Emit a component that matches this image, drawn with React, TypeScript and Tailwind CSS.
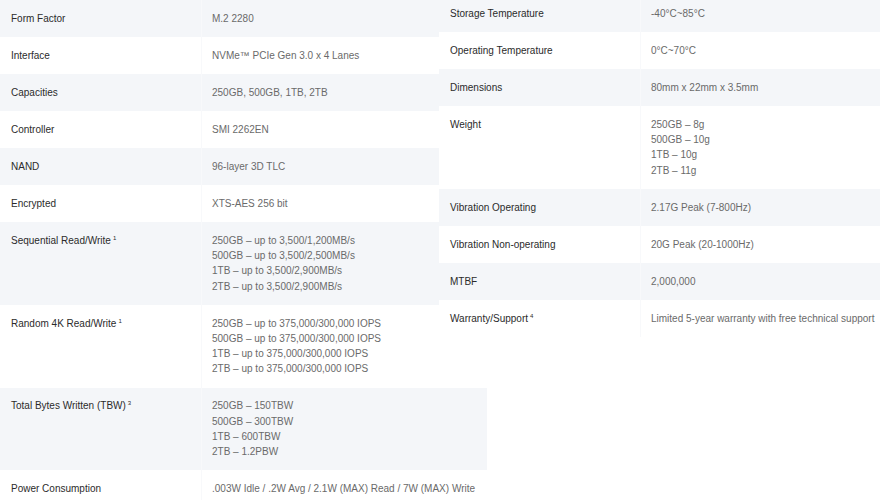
import React from "react";

type Row = { label: string; sup?: string; value: string[]; shaded: boolean };

const left: Row[] = [
  { label: "Form Factor", value: ["M.2 2280"], shaded: true },
  { label: "Interface", value: ["NVMe™ PCIe Gen 3.0 x 4 Lanes"], shaded: false },
  { label: "Capacities", value: ["250GB, 500GB, 1TB, 2TB"], shaded: true },
  { label: "Controller", value: ["SMI 2262EN"], shaded: false },
  { label: "NAND", value: ["96-layer 3D TLC"], shaded: true },
  { label: "Encrypted", value: ["XTS-AES 256 bit"], shaded: false },
  {
    label: "Sequential Read/Write",
    sup: "1",
    value: [
      "250GB – up to 3,500/1,200MB/s",
      "500GB – up to 3,500/2,500MB/s",
      "1TB – up to 3,500/2,900MB/s",
      "2TB – up to 3,500/2,900MB/s",
    ],
    shaded: true,
  },
  {
    label: "Random 4K Read/Write",
    sup: "1",
    value: [
      "250GB – up to 375,000/300,000 IOPS",
      "500GB – up to 375,000/300,000 IOPS",
      "1TB – up to 375,000/300,000 IOPS",
      "2TB – up to 375,000/300,000 IOPS",
    ],
    shaded: false,
  },
];

const leftBottom: Row[] = [
  {
    label: "Total Bytes Written (TBW)",
    sup: "3",
    value: ["250GB – 150TBW", "500GB – 300TBW", "1TB – 600TBW", "2TB – 1.2PBW"],
    shaded: true,
  },
  {
    label: "Power Consumption",
    value: [".003W Idle / .2W Avg / 2.1W (MAX) Read / 7W (MAX) Write"],
    shaded: false,
  },
];

const right: Row[] = [
  { label: "Storage Temperature", value: ["-40°C~85°C"], shaded: true },
  { label: "Operating Temperature", value: ["0°C~70°C"], shaded: false },
  { label: "Dimensions", value: ["80mm x 22mm x 3.5mm"], shaded: true },
  { label: "Weight", value: ["250GB – 8g", "500GB – 10g", "1TB – 10g", "2TB – 11g"], shaded: false },
  { label: "Vibration Operating", value: ["2.17G Peak (7-800Hz)"], shaded: true },
  { label: "Vibration Non-operating", value: ["20G Peak (20-1000Hz)"], shaded: false },
  { label: "MTBF", value: ["2,000,000"], shaded: true },
  { label: "Warranty/Support", sup: "4", value: ["Limited 5-year warranty with free technical support"], shaded: false },
];

function SpecRow({ row }: { row: Row }) {
  return (
    <div className={`flex w-full ${row.shaded ? "bg-[#f4f6f9]" : "bg-white"}`}>
      <div className="w-[201px] shrink-0 pl-[11px] py-[10.875px] text-[#2b2b2b] leading-[15.25px] whitespace-nowrap">
        {row.label}
        {row.sup && (
          <span className="inline-block align-top text-[6px] leading-[6px] ml-[2px] mt-[2px]">{row.sup}</span>
        )}
      </div>
      <div className="flex-1 border-l border-[#f8f9fb] pl-[10px] py-[10.875px] text-[#6a6a6a] leading-[15.25px] whitespace-nowrap">
        {row.value.map((v, i) => (
          <div key={i}>{v}</div>
        ))}
      </div>
    </div>
  );
}

export default function App() {
  return (
    <div
      className="w-[880px] h-[500px] overflow-hidden bg-white text-[10px]"
      style={{ fontFamily: '"Liberation Sans", Arial, sans-serif' }}
    >
      <div className="flex items-start">
        <div className="w-[439px] shrink-0 flex flex-col">
          {left.map((r, i) => (
            <SpecRow key={i} row={r} />
          ))}
          <div className="w-[487px]">
            {leftBottom.map((r, i) => (
              <SpecRow key={i} row={r} />
            ))}
          </div>
        </div>
        <div className="flex-1 flex flex-col -mt-[5px]">
          {right.map((r, i) => (
            <SpecRow key={i} row={r} />
          ))}
        </div>
      </div>
    </div>
  );
}
